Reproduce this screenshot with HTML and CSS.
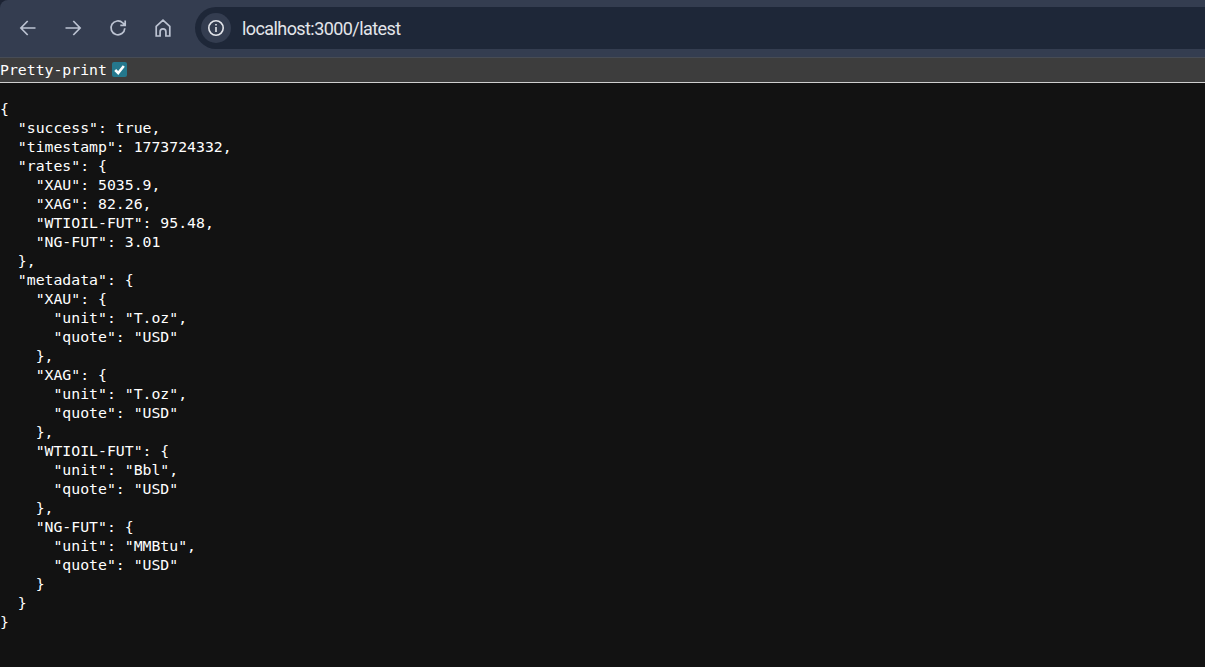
FILE: index.html
```html
<!DOCTYPE html>
<html lang="en">
<head>
<meta charset="utf-8">
<title>localhost:3000/latest</title>
<link rel="stylesheet" href="styles.css">
</head>
<body>
<header class="toolbar">
  <div class="nav">
    <svg class="icon" viewBox="0 0 24 24"><path d="M19.5 12H5M11.7 5 4.9 12l6.8 7"/></svg>
    <svg class="icon" viewBox="0 0 24 24"><path d="M4.5 12H19M12.3 5l6.8 7-6.8 7"/></svg>
    <svg class="icon" viewBox="0 0 24 24"><path d="M18.8 12.2a6.9 6.9 0 1 1-2-5.2L19.2 9.2M19.2 4.4v4.9h-4.9"/></svg>
    <svg class="icon" viewBox="0 0 24 24"><path d="M5.2 20V10.4L12 4.2l6.8 6.2V20h-3.9v-4.3a2.9 2.9 0 0 0-5.8 0V20z"/></svg>
  </div>
  <div class="omnibox">
    <span class="chip"><svg class="info" viewBox="0 0 20 20"><circle cx="10" cy="10" r="7.2"/><path d="M10 9v5M10 6v1.6"/></svg></span>
    <span class="url">localhost:3000/latest</span>
  </div>
</header>
<div class="pretty"><span>Pretty-print</span><span class="check"><svg viewBox="0 0 15 15"><path d="M3.2 8 6.2 11 11.8 4"/></svg></span></div>
<pre class="json">{
  "success": true,
  "timestamp": 1773724332,
  "rates": {
    "XAU": 5035.9,
    "XAG": 82.26,
    "WTIOIL-FUT": 95.48,
    "NG-FUT": 3.01
  },
  "metadata": {
    "XAU": {
      "unit": "T.oz",
      "quote": "USD"
    },
    "XAG": {
      "unit": "T.oz",
      "quote": "USD"
    },
    "WTIOIL-FUT": {
      "unit": "Bbl",
      "quote": "USD"
    },
    "NG-FUT": {
      "unit": "MMBtu",
      "quote": "USD"
    }
  }
}</pre>
</body>
</html>
```
FILE: styles.css
```css
html, body {
  margin: 0;
  height: 100%;
  overflow: hidden;
}
body {
  display: flex;
  flex-direction: column;
  background: #1c2333;
}
.toolbar {
  flex: none;
  height: 58px;
  box-sizing: border-box;
  display: flex;
  align-items: center;
  padding-bottom: 2px;
  background: #343d50;
  border-bottom: 1px solid #474c55;
  border-top-left-radius: 8px;
}
.nav {
  display: flex;
  align-items: center;
  gap: 21px;
  padding-left: 15.5px;
  width: 195px;
  box-sizing: border-box;
}
.icon {
  width: 24px;
  height: 24px;
  fill: none;
  stroke: #bcc3d2;
  stroke-width: 1.7;
}
.omnibox {
  flex: 1;
  height: 42px;
  display: flex;
  align-items: center;
  gap: 11px;
  padding-left: 6px;
  background: #1e2738;
  border-radius: 21px 0 0 21px;
}
.chip {
  width: 30px;
  height: 30px;
  border-radius: 50%;
  background: #343d50;
  display: flex;
  align-items: center;
  justify-content: center;
}
.info {
  width: 20px;
  height: 20px;
  fill: none;
  stroke: #e3e5ea;
  stroke-width: 1.6;
}
.url {
  padding-top: 2px;
  font: 18px Roboto, "Liberation Sans", sans-serif;
  letter-spacing: -0.58px;
  color: #e3e5ea;
}
.pretty {
  flex: none;
  height: 25px;
  box-sizing: border-box;
  display: flex;
  align-items: center;
  gap: 5px;
  padding-bottom: 1px;
  background: #3d3d3d;
  border-bottom: 1px solid #cfcfcf;
  font: 14.8px/19px "DejaVu Sans Mono", monospace;
  color: #ffffff;
}
.check {
  width: 15px;
  height: 15px;
  border-radius: 2px;
  background: #25788d;
  display: block;
}
.check svg {
  display: block;
  fill: none;
  stroke: #fff;
  stroke-width: 2.6;
}
.json {
  flex: 1;
  margin: 0;
  padding-top: 16px;
  background: #121212;
  font: 14.8px/19px "DejaVu Sans Mono", monospace;
  color: #ffffff;
}
```
